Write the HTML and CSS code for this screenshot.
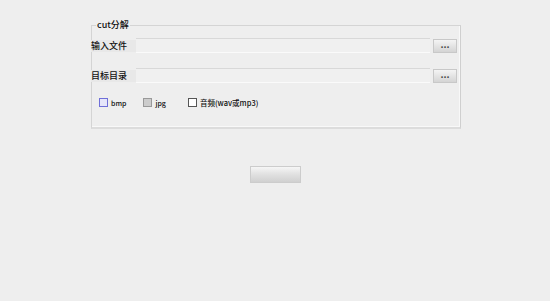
FILE: index.html
```html
<!DOCTYPE html>
<html lang="zh">
<head>
    <meta charset="UTF-8">
    <title>cut分解</title>
    <link rel="stylesheet" href="styles.css">
</head>
<body>
    <div class="panel">
        <div class="group">
            <span class="legend">cut分解</span>
            <div class="row">
                <label class="label">输入文件</label>
                <div class="field"></div>
                <button class="browse">...</button>
            </div>
            <div class="row">
                <label class="label">目标目录</label>
                <div class="field"></div>
                <button class="browse">...</button>
            </div>
            <div class="checks">
                <span class="check"><span class="box on"></span>bmp</span>
                <span class="check"><span class="box dis"></span>jpg</span>
                <span class="check cjk"><span class="box"></span>音频(wav或mp3)</span>
            </div>
        </div>
        <div class="actions">
            <button class="go"></button>
        </div>
    </div>
</body>
</html>
```

FILE: styles.css
```css
body {
    margin: 0;
    background-color: #eeeeee;
    font-family: "Noto Sans CJK SC", "DejaVu Sans", sans-serif;
    font-size: 9px;
    color: #111;
}
.panel {
    padding: 25px 89px 0 91px;
}
.group {
    position: relative;
    height: 101px;
    border: 1px solid #d4d4d4;
    border-right-color: #cfcfcf;
    border-bottom: 2px solid #dcdcdc;
    box-shadow: inset -1px -1px 0 #f8f8f8;
}
.legend {
    position: absolute;
    top: -7px;
    left: 4px;
    padding: 0 1px;
    background-color: #eeeeee;
    line-height: 12px;
    font-weight: 500;
}
.row {
    display: flex;
    align-items: center;
    height: 15px;
    margin-top: 12px;
}
.row + .row {
    margin-top: 15px;
}
.label {
    width: 45px;
    margin-left: -1px;
    line-height: 12px;
    background-color: #e8e8e8;
    font-weight: 500;
}
.field {
    flex: 1;
    height: 13px;
    border-top: 1px solid #d8d8d8;
    border-bottom: 1px solid #fafafa;
    background-color: #f0f0f0;
}
.browse {
    width: 24px;
    height: 14px;
    margin: 0 3px;
    padding: 0;
    border: 1px solid #c8c8c8;
    background: linear-gradient(#f4f4f4, #d4d4d4);
    font-family: "DejaVu Sans", sans-serif;
    font-size: 8px;
    font-weight: bold;
    line-height: 10px;
    color: #444;
}
.checks {
    display: flex;
    margin-top: 14px;
    padding-left: 7px;
}
.check {
    display: flex;
    align-items: center;
    margin-right: 17px;
    font-size: 7px;
    font-weight: 500;
}
.check + .check {
    margin-right: 22px;
}
.check.cjk {
    font-size: 7.5px;
}
.box {
    width: 7px;
    height: 7px;
    margin-right: 3px;
    border: 1px solid #555;
    background-color: #fff;
}
.box.on {
    border-color: #6f6fd8;
    background-color: #e6e6fa;
}
.box.dis {
    border-color: #999;
    background-color: #ccc;
}
.actions {
    display: flex;
    justify-content: center;
    padding-top: 37px;
    padding-right: 2px;
}
.go {
    width: 51px;
    height: 17px;
    padding: 0;
    border: 1px solid #cccccc;
    background: linear-gradient(#f6f6f6 0%, #e2e2e2 45%, #d0d0d0 100%);
}
```
